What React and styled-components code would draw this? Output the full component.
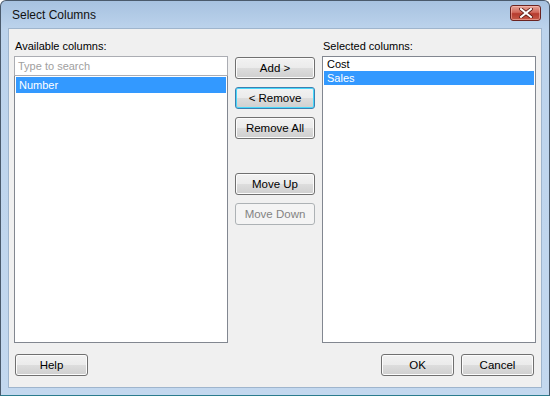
import React from 'react';
import styled, { createGlobalStyle, css } from 'styled-components';

const GlobalStyle = createGlobalStyle`
  html, body {
    margin: 0;
    padding: 0;
    background: #ffffff;
  }
  body {
    font-family: "Liberation Sans", Arial, sans-serif;
    font-size: 11px;
    color: #000;
  }
`;

const Window = styled.div`
  width: 550px;
  height: 396px;
  box-sizing: border-box;
  border: 1px solid #4a5a6c;
  border-bottom-color: #2b7c8e;
  border-radius: 6px 6px 0 0;
  background: linear-gradient(to bottom, #a7c2e0 0px, #bcd3ec 28px, #c3d8ef 100%);
  display: flex;
  flex-direction: column;
  padding: 0 7px 7px 7px;
`;

const TitleBar = styled.div`
  height: 27px;
  display: flex;
  align-items: center;
  justify-content: space-between;
  padding: 0 1px 0 4px;
`;

const Title = styled.span`
  font-size: 12px;
  color: #111;
  margin-top: 1px;
`;

const CloseButton = styled.div`
  width: 29px;
  height: 14px;
  margin-top: -3px;
  border: 1px solid #6b2320;
  border-radius: 3px;
  background: linear-gradient(to bottom, #e6a397 0%, #d26a5c 45%, #b63b2e 55%, #c55a48 100%);
  display: flex;
  align-items: center;
  justify-content: center;
  box-shadow: inset 0 0 0 1px rgba(255, 200, 190, 0.5);
`;

const Client = styled.div`
  flex: 1;
  background: #f0f0f0;
  border: 1px solid #9fb5cd;
  display: grid;
  grid-template-columns: 214px 80px 214px;
  grid-template-rows: auto 1fr auto;
  column-gap: 7px;
  padding: 9px 6px 11px 5px;
`;

const Label = styled.div`
  height: 18px;
  line-height: 16px;
  padding-left: 1px;
  grid-column: ${p => p.col};
  grid-row: 1;
`;

const ListColumn = styled.div`
  grid-column: ${p => p.col};
  grid-row: 2;
  display: flex;
  flex-direction: column;
`;

const SearchBox = styled.div`
  height: 20px;
  box-sizing: border-box;
  border: 1px solid #abadb3;
  background: #fff;
  color: #a0a0a0;
  padding: 2px 2px 0 3px;
  line-height: 15px;
`;

const ListBox = styled.div`
  flex: 1;
  background: #fff;
  border: 1px solid #828790;
  border-top: ${p => (p.attached ? 'none' : '1px solid #828790')};
  padding: ${p => (p.attached ? '1px 1px 0' : '0 1px')};
  box-sizing: border-box;
`;

const Item = styled.div`
  height: ${p => p.h}px;
  line-height: ${p => p.h}px;
  padding-left: 3px;
  ${p => p.selected && css`
    background: #3399ff;
    color: #fff;
  `}
`;

const ButtonColumn = styled.div`
  grid-column: 2;
  grid-row: 2;
  display: flex;
  flex-direction: column;
  padding-top: 1px;
`;

const Button = styled.div`
  width: ${p => p.w || 80}px;
  height: 22px;
  box-sizing: border-box;
  border: 1px solid #707070;
  border-radius: 3px;
  background: linear-gradient(to bottom, #f2f2f2 0%, #ebebeb 50%, #dddddd 51%, #cfcfcf 100%);
  box-shadow: inset 0 0 0 1px #fcfcfc;
  display: flex;
  align-items: center;
  justify-content: center;
  color: #000;
  font-size: 11.5px;
  margin-top: ${p => p.mt || 0}px;
  ${p => p.focused && css`
    border-color: #3c7fb1;
    box-shadow: inset 0 0 0 1px #48d8fb;
  `}
  ${p => p.disabled && css`
    border-color: #adb2b5;
    background: #f4f4f4;
    box-shadow: none;
    color: #838383;
  `}
`;

const Footer = styled.div`
  grid-column: 1 / 4;
  grid-row: 3;
  display: flex;
  justify-content: space-between;
  align-items: center;
  padding: 11px 2px 0 1px;
`;

const FooterRight = styled.div`
  display: flex;
  gap: 7px;
`;

function CloseGlyph() {
  return (
    <svg width="14" height="10" viewBox="0 0 14 10">
      <path d="M2 1 L12 9 M12 1 L2 9" stroke="#5a1a14" strokeWidth="3.6" strokeLinecap="square" />
      <path d="M2 1 L12 9 M12 1 L2 9" stroke="#ffffff" strokeWidth="2" strokeLinecap="square" />
    </svg>
  );
}

export default function App() {
  return (
    <>
      <GlobalStyle />
      <Window>
        <TitleBar>
          <Title>Select Columns</Title>
          <CloseButton><CloseGlyph /></CloseButton>
        </TitleBar>
        <Client>
          <Label col={1}>Available columns:</Label>
          <Label col={3}>Selected columns:</Label>

          <ListColumn col={1}>
            <SearchBox>Type to search</SearchBox>
            <ListBox attached>
              <Item h={16} selected>Number</Item>
            </ListBox>
          </ListColumn>

          <ButtonColumn>
            <Button>Add &gt;</Button>
            <Button mt={8} focused>&lt; Remove</Button>
            <Button mt={8}>Remove All</Button>
            <Button mt={34}>Move Up</Button>
            <Button mt={8} disabled>Move Down</Button>
          </ButtonColumn>

          <ListColumn col={3}>
            <ListBox>
              <Item h={14}>Cost</Item>
              <Item h={14} selected>Sales</Item>
            </ListBox>
          </ListColumn>

          <Footer>
            <Button w={73}>Help</Button>
            <FooterRight>
              <Button w={73}>OK</Button>
              <Button w={73}>Cancel</Button>
            </FooterRight>
          </Footer>
        </Client>
      </Window>
    </>
  );
}
